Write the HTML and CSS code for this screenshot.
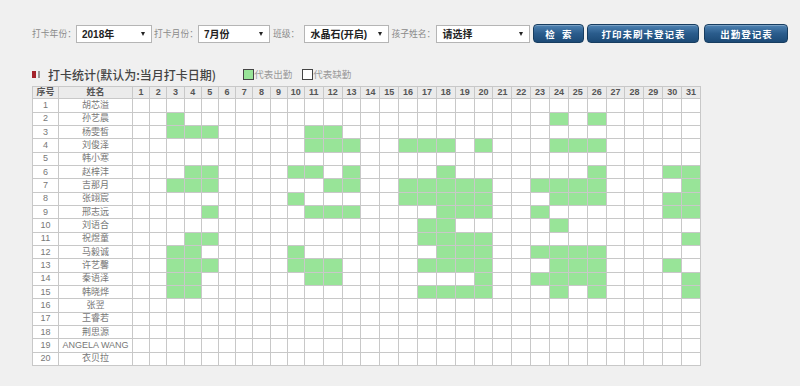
FILE: index.html
```html
<!DOCTYPE html>
<html lang="zh-CN">
<head>
  <meta charset="UTF-8" />
  <meta name="viewport" content="width=device-width, initial-scale=1.0"/>
  <title>打卡统计</title>
  <link rel="stylesheet" href="styles.css">
</head>
<body>
  <div class="toolbar">
    <span class="lbl">打卡年份：</span>
    <span class="select w-year"><span>2018年</span><i class="arrow"></i></span>
    <span class="lbl ml2">打卡月份：</span>
    <span class="select w-month"><span>7月份</span><i class="arrow"></i></span>
    <span class="lbl ml3">班级：</span>
    <span class="select w-class"><span>水晶石(开启)</span><i class="arrow"></i></span>
    <span class="lbl ml2">孩子姓名：</span>
    <span class="select w-child"><span>请选择</span><i class="arrow"></i></span>
    <button class="btn w-search">检&nbsp;&nbsp;索</button>
    <button class="btn w-print">打印未刷卡登记表</button>
    <button class="btn w-attend">出勤登记表</button>
  </div>

  <div class="title-row">
    <h2 class="title"><i class="mark"></i>打卡统计(默认为:当月打卡日期)</h2>
    <span class="legend first"><i class="box on"></i>代表出勤</span>
    <span class="legend"><i class="box"></i>代表缺勤</span>
  </div>

  <table class="grid">
    <colgroup id="cols"></colgroup>
    <thead>
      <tr id="head"><th>序号</th><th>姓名</th></tr>
    </thead>
    <tbody id="body"></tbody>
  </table>

  <script>
    const kids = [
      ['胡芯溢', []],
      ['孙艺晨', [3, 24, 26]],
      ['杨雯皙', [3, 4, 5, 11, 12]],
      ['刘俊泽', [11, 12, 13, 16, 17, 18, 20, 24, 25, 26]],
      ['韩小寒', []],
      ['赵梓沣', [4, 5, 10, 11, 13, 18, 26, 30, 31]],
      ['吉那月', [3, 4, 5, 12, 13, 16, 17, 18, 19, 20, 23, 24, 25, 26, 31]],
      ['张翊宸', [10, 16, 17, 18, 19, 20, 24, 25, 26, 30, 31]],
      ['邢志远', [5, 11, 12, 13, 18, 19, 20, 23, 30, 31]],
      ['刘语合', [17, 18, 24]],
      ['祝煜童', [4, 5, 17, 18, 19, 20, 31]],
      ['马毅诚', [3, 4, 10, 18, 19, 20, 23, 24, 25, 26]],
      ['许艺馨', [3, 4, 5, 10, 11, 12, 17, 18, 19, 20, 24, 25, 26, 30]],
      ['秦语泽', [3, 4, 11, 12, 20, 23, 24, 25, 26, 31]],
      ['韩晓烨', [3, 4, 17, 18, 19, 20, 24, 26, 31]],
      ['张翌', []],
      ['王睿若', []],
      ['荆思源', []],
      ['ANGELA WANG', []],
      ['衣贝拉', []]
    ];

    const cols = document.getElementById('cols');
    const head = document.getElementById('head');
    const body = document.getElementById('body');

    let colHtml = '<col class="c-no"><col class="c-name">';
    for (let d = 1; d <= 31; d++) {
      colHtml += `<col class="${d <= 10 ? 'c-d1' : 'c-d2'}">`;
      head.insertAdjacentHTML('beforeend', `<th>${d}</th>`);
    }
    cols.innerHTML = colHtml;

    let rows = '';
    kids.forEach(([name, days], i) => {
      rows += `<tr><td>${i + 1}</td><td>${name}</td>`;
      for (let d = 1; d <= 31; d++) {
        rows += days.includes(d) ? '<td class="on"></td>' : '<td></td>';
      }
      rows += '</tr>';
    });
    body.innerHTML = rows;
  </script>
</body>
</html>
```

FILE: styles.css
```css
body {
  margin: 0;
  background: #f0f0f0;
  font-family: "Liberation Sans", "Noto Sans CJK SC", sans-serif;
  color: #666;
}

.toolbar {
  display: flex;
  align-items: center;
  height: 19px;
  padding: 24px 0 0 32px;
}

.lbl {
  font-size: 8.8px;
  color: #8a8a8a;
  white-space: nowrap;
}

.ml2 { margin-left: 2px; }
.ml3 { margin-left: 3px; }

.select {
  display: flex;
  align-items: center;
  justify-content: space-between;
  box-sizing: border-box;
  height: 18px;
  padding: 0 6px 0 5px;
  background: #fff;
  border: 1px solid #b5b5b5;
  font-size: 10px;
  font-weight: bold;
  color: #222;
}

.arrow {
  width: 0;
  height: 0;
  border-left: 2.5px solid transparent;
  border-right: 2.5px solid transparent;
  border-top: 4px solid #222;
}

.w-year { width: 76px; }
.w-month { width: 72px; }
.w-class { width: 85px; margin-left: 5px; }
.w-child { width: 94px; margin-left: 1px; }

.btn {
  box-sizing: border-box;
  height: 19px;
  padding: 0;
  border: 1px solid #173d60;
  border-radius: 4px;
  background: linear-gradient(#4f83b3, #2a5c8c 50%, #1c4a76);
  box-shadow: inset 0 1px 0 rgba(255, 255, 255, 0.25);
  color: #fff;
  font-family: "Noto Sans CJK SC", sans-serif;
  font-size: 9.5px;
  font-weight: bold;
  letter-spacing: 1px;
  cursor: pointer;
}

.w-search { width: 51px; margin-left: 3px; }
.w-print { width: 112px; margin-left: 3px; }
.w-attend { width: 84px; margin-left: 5px; }

.title-row {
  display: flex;
  align-items: center;
  height: 16px;
  margin: 23px 0 4px;
  padding-left: 32px;
}

.title {
  display: flex;
  align-items: center;
  margin: 0;
  font-family: "Noto Sans CJK SC", sans-serif;
  font-size: 12px;
  font-weight: 500;
  color: #444;
}

.mark {
  width: 4px;
  height: 7px;
  margin-right: 10px;
  background: #a3232b;
  border-right: 2px solid #f0f0f0;
  box-shadow: 2px 0 0 #999;
}

.legend {
  display: flex;
  align-items: center;
  font-size: 9.5px;
  color: #999;
}

.legend.first { margin-left: 27px; margin-right: 10px; }

.box {
  box-sizing: border-box;
  width: 11px;
  height: 11px;
  border: 1px solid #444;
  background: #fff;
}

.box.on { background: #98e498; }

.grid {
  margin-left: 32px;
  width: 668px;
  table-layout: fixed;
  border-collapse: collapse;
  font-size: 9px;
  text-align: center;
  background: #fff;
}

.c-no { width: 26px; }
.c-name { width: 74px; }
.c-d1 { width: 17.2px; }
.c-d2 { width: 18.86px; }

.grid th,
.grid td {
  padding: 0;
  border: 1px solid #c8c8c8;
  line-height: 11px;
  white-space: nowrap;
  overflow: hidden;
}

.grid th {
  height: 11.3px;
  background: #ebebeb;
  color: #555;
  font-weight: bold;
}

.grid td {
  height: 12.33px;
  color: #777;
}

.grid td.on { background: #98e498; }
```
